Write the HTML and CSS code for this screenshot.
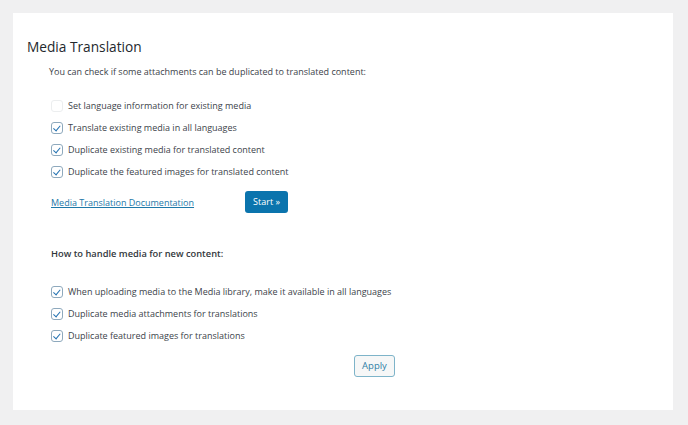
FILE: index.html
```html
<!DOCTYPE html>
<html>
<head>
<meta charset="utf-8">
<link rel="stylesheet" href="styles.css">
</head>
<body>
<div class="panel">
  <h2 class="title">Media Translation</h2>
  <p class="desc">You can check if some attachments can be duplicated to translated content:</p>
  <div class="checks first">
    <label class="row"><span class="box"></span>Set language information for existing media</label>
    <label class="row"><span class="box on"></span>Translate existing media in all languages</label>
    <label class="row"><span class="box on"></span>Duplicate existing media for translated content</label>
    <label class="row"><span class="box on"></span>Duplicate the featured images for translated content</label>
  </div>
  <div class="actions">
    <a class="doc" href="#">Media Translation Documentation</a>
    <span class="btn-primary">Start »</span>
  </div>
  <h3 class="subhead">How to handle media for new content:</h3>
  <div class="checks second">
    <label class="row"><span class="box on"></span>When uploading media to the Media library, make it available in all languages</label>
    <label class="row"><span class="box on"></span>Duplicate media attachments for translations</label>
    <label class="row"><span class="box on"></span>Duplicate featured images for translations</label>
  </div>
  <div class="apply-row">
    <span class="btn-secondary">Apply</span>
  </div>
</div>
</body>
</html>
```
FILE: styles.css
```css
html, body {
  margin: 0;
  padding: 0;
  background: #f0f0f1;
}
body {
  padding: 13px 15px 16px 13px;
  font-family: "Open Sans", "Noto Sans", sans-serif;
  color: #444;
}
.panel {
  background: #fff;
  height: 397px;
  box-sizing: border-box;
  padding: 24px 14px 0 14px;
  display: flex;
  flex-direction: column;
  align-items: flex-start;
}
.title {
  margin: 0;
  font-size: 13.7px;
  font-weight: 400;
  color: #23282d;
  line-height: 20px;
}
.desc {
  margin: 7px 0 0 22px;
  font-size: 9px;
  line-height: 16px;
  color: #3c434a;
}
.checks {
  display: flex;
  flex-direction: column;
  gap: 6px;
  margin-left: 24px;
}
.checks.first { margin-top: 18px; }
.checks.second { margin-top: 22px; }
.row {
  display: flex;
  align-items: center;
  gap: 5px;
  font-size: 9px;
  line-height: 16px;
  color: #3c434a;
}
.box {
  width: 10px;
  height: 10px;
  border: 1px solid #8ea9bd;
  border-radius: 3px;
  box-sizing: content-box;
  background: #fff;
  flex: none;
  position: relative;
}
.box:not(.on) {
  border-color: #eceeef;
}
.box.on::after {
  content: "";
  position: absolute;
  left: 3px;
  top: 1px;
  width: 3px;
  height: 5.5px;
  border: solid #2271b1;
  border-width: 0 1.6px 1.6px 0;
  transform: rotate(40deg);
}
.actions {
  display: flex;
  align-items: center;
  margin: 11px 0 0 24px;
}
.doc {
  font-size: 9px;
  color: #1e78a8;
  text-decoration: underline;
  width: 194px;
}
.btn-primary {
  background: #0b74ad;
  color: #fff;
  font-size: 9px;
  border-radius: 3px;
  height: 22px;
  line-height: 22px;
  box-sizing: border-box;
  width: 43px;
  text-align: center;
  white-space: nowrap;
}
.subhead {
  margin: 33px 0 0 24px;
  font-size: 9.3px;
  font-weight: 600;
  color: #32373c;
  line-height: 16px;
}
.apply-row {
  display: flex;
  margin: 11px 0 0 327px;
}
.btn-secondary {
  border: 1px solid #7eb4c9;
  background: #f6f7f7;
  color: #2f7fa6;
  font-size: 9.5px;
  border-radius: 3px;
  height: 22px;
  line-height: 20px;
  width: 41px;
  box-sizing: border-box;
  text-align: center;
}
```
